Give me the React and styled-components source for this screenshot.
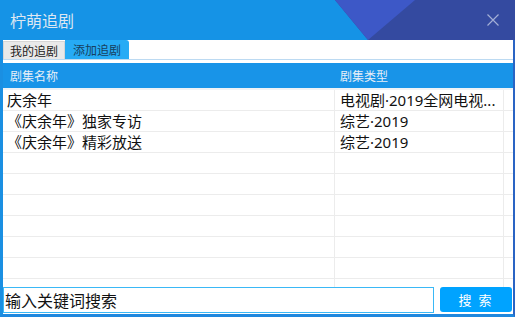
import React from 'react';
import styled, { createGlobalStyle } from 'styled-components';

const Global = createGlobalStyle`
  html, body { margin: 0; padding: 0; background: #fff; }
  body { font-family: "Noto Sans", "Noto Sans CJK SC", "Microsoft YaHei", sans-serif; }
  * { box-sizing: border-box; }
`;

const Window = styled.div`
  width: 515px;
  height: 317px;
  display: flex;
  flex-direction: column;
  background: #fff;
  overflow: hidden;
`;

const TitleBar = styled.header`
  position: relative;
  flex: none;
  height: 40px;
  background: #1593e6;
  display: flex;
  align-items: center;
  justify-content: space-between;
  padding: 0 16px 0 10px;
  overflow: hidden;
`;

const Decoration = styled.svg`
  position: absolute;
  top: 0;
  right: 0;
`;

const Title = styled.h1`
  position: relative;
  margin: 0;
  font-family: "Noto Sans CJK SC", sans-serif;
  font-size: 16px;
  font-weight: 400;
  line-height: 20px;
  color: #dde7f2;
`;

const CloseButton = styled.button`
  position: relative;
  width: 12px;
  height: 12px;
  padding: 0;
  border: 0;
  background: none;
  display: flex;
`;

const Body = styled.div`
  flex: 1;
  min-height: 0;
  display: flex;
  flex-direction: column;
  border-left: 3px solid #1a8fe2;
  border-right: 2px solid #2a64c4;
  border-bottom: 3px solid #1f88de;
`;

const TabBar = styled.nav`
  flex: none;
  height: 20px;
  display: flex;
  align-items: flex-end;
  border-bottom: 1px solid #bcdaf2;
`;

const Tab = styled.div`
  height: ${p => (p.$active ? 19 : 18)}px;
  padding: 0 ${p => (p.$active ? 8 : 6)}px;
  display: flex;
  align-items: center;
  font-family: "Noto Sans CJK SC", sans-serif;
  font-size: 12px;
  line-height: 16px;
  color: ${p => (p.$active ? '#17405e' : '#222')};
  background: ${p => (p.$active ? '#26abf5' : '#e9e9e9')};
  border-radius: ${p => (p.$active ? '0 3px 0 0' : '0')};
  ${p => !p.$active && 'border: 1px solid #d6d6d6; border-bottom: 0;'}
`;

const Table = styled.div`
  flex: 1;
  min-height: 0;
  overflow: hidden;
  padding-top: 3px;
`;

const HeaderRow = styled.div`
  display: grid;
  grid-template-columns: 331px 169px 1fr;
  height: 27px;
  background: #1894e8;
  border-bottom: 2px solid #eef2f6;
`;

const HeaderCell = styled.div`
  display: flex;
  align-items: center;
  padding-left: ${p => p.$pad}px;
  font-family: "Noto Sans CJK SC", sans-serif;
  font-size: 12px;
  color: #e6eef7;
`;

const Row = styled.div`
  display: grid;
  grid-template-columns: 331px 169px 1fr;
  height: 21px;
  border-bottom: 1px solid #ececec;
`;

const Cell = styled.div`
  padding-left: ${p => p.$pad}px;
  font-size: 15px;
  line-height: 20px;
  color: #111;
  white-space: nowrap;
  overflow: hidden;
  ${p => p.$divider && 'border-left: 1px solid #ececec;'}
`;

const Footer = styled.div`
  flex: none;
  height: 27px;
  display: flex;
  gap: 6px;
  padding: 0 1px 1px 0;
`;

const SearchInput = styled.input`
  flex: 1;
  min-width: 0;
  height: 26px;
  border: 1px solid #3ab8f6;
  outline: none;
  padding: 0 1px;
  font-family: "Noto Sans CJK SC", sans-serif;
  font-size: 16px;
  color: #111;
  &::placeholder { color: #111; }
`;

const SearchButton = styled.button`
  width: 72px;
  height: 25px;
  border: 0;
  border-radius: 3px;
  background: #00a3ff;
  color: #fff;
  font-family: "Noto Sans CJK SC", sans-serif;
  font-size: 13px;
  letter-spacing: 2px;
  white-space: pre;
`;

const shows = [
  { name: '庆余年', type: '电视剧·2019全网电视...' },
  { name: '《庆余年》独家专访', type: '综艺·2019' },
  { name: '《庆余年》精彩放送', type: '综艺·2019' },
];

export default function App() {
  const rows = [...shows, ...Array.from({ length: 7 }, () => ({ name: '', type: '' }))];
  return (
    <>
      <Global />
      <Window>
        <TitleBar>
          <Decoration width="180" height="40" viewBox="0 0 180 40">
            <polygon points="0,0 180,0 180,40 33,40" fill="#344aa0" />
            <polygon points="0,0 80,0 33,40" fill="#3d58c7" />
          </Decoration>
          <Title>柠萌追剧</Title>
          <CloseButton aria-label="关闭">
            <svg width="12" height="12" viewBox="0 0 12 12">
              <path d="M0.5 0.5 L11.5 11.5 M11.5 0.5 L0.5 11.5" stroke="#a3afd6" strokeWidth="1.2" />
            </svg>
          </CloseButton>
        </TitleBar>
        <Body>
          <TabBar>
            <Tab>我的追剧</Tab>
            <Tab $active>添加追剧</Tab>
          </TabBar>
          <Table>
            <HeaderRow>
              <HeaderCell $pad={7}>剧集名称</HeaderCell>
              <HeaderCell $pad={6}>剧集类型</HeaderCell>
              <HeaderCell $pad={0} />
            </HeaderRow>
            {rows.map((r, i) => (
              <Row key={i}>
                <Cell $pad={4}>{r.name}</Cell>
                <Cell $pad={5} $divider>{r.type}</Cell>
                <Cell $pad={0} $divider />
              </Row>
            ))}
          </Table>
          <Footer>
            <SearchInput placeholder="输入关键词搜索" />
            <SearchButton>{'搜 索'}</SearchButton>
          </Footer>
        </Body>
      </Window>
    </>
  );
}
